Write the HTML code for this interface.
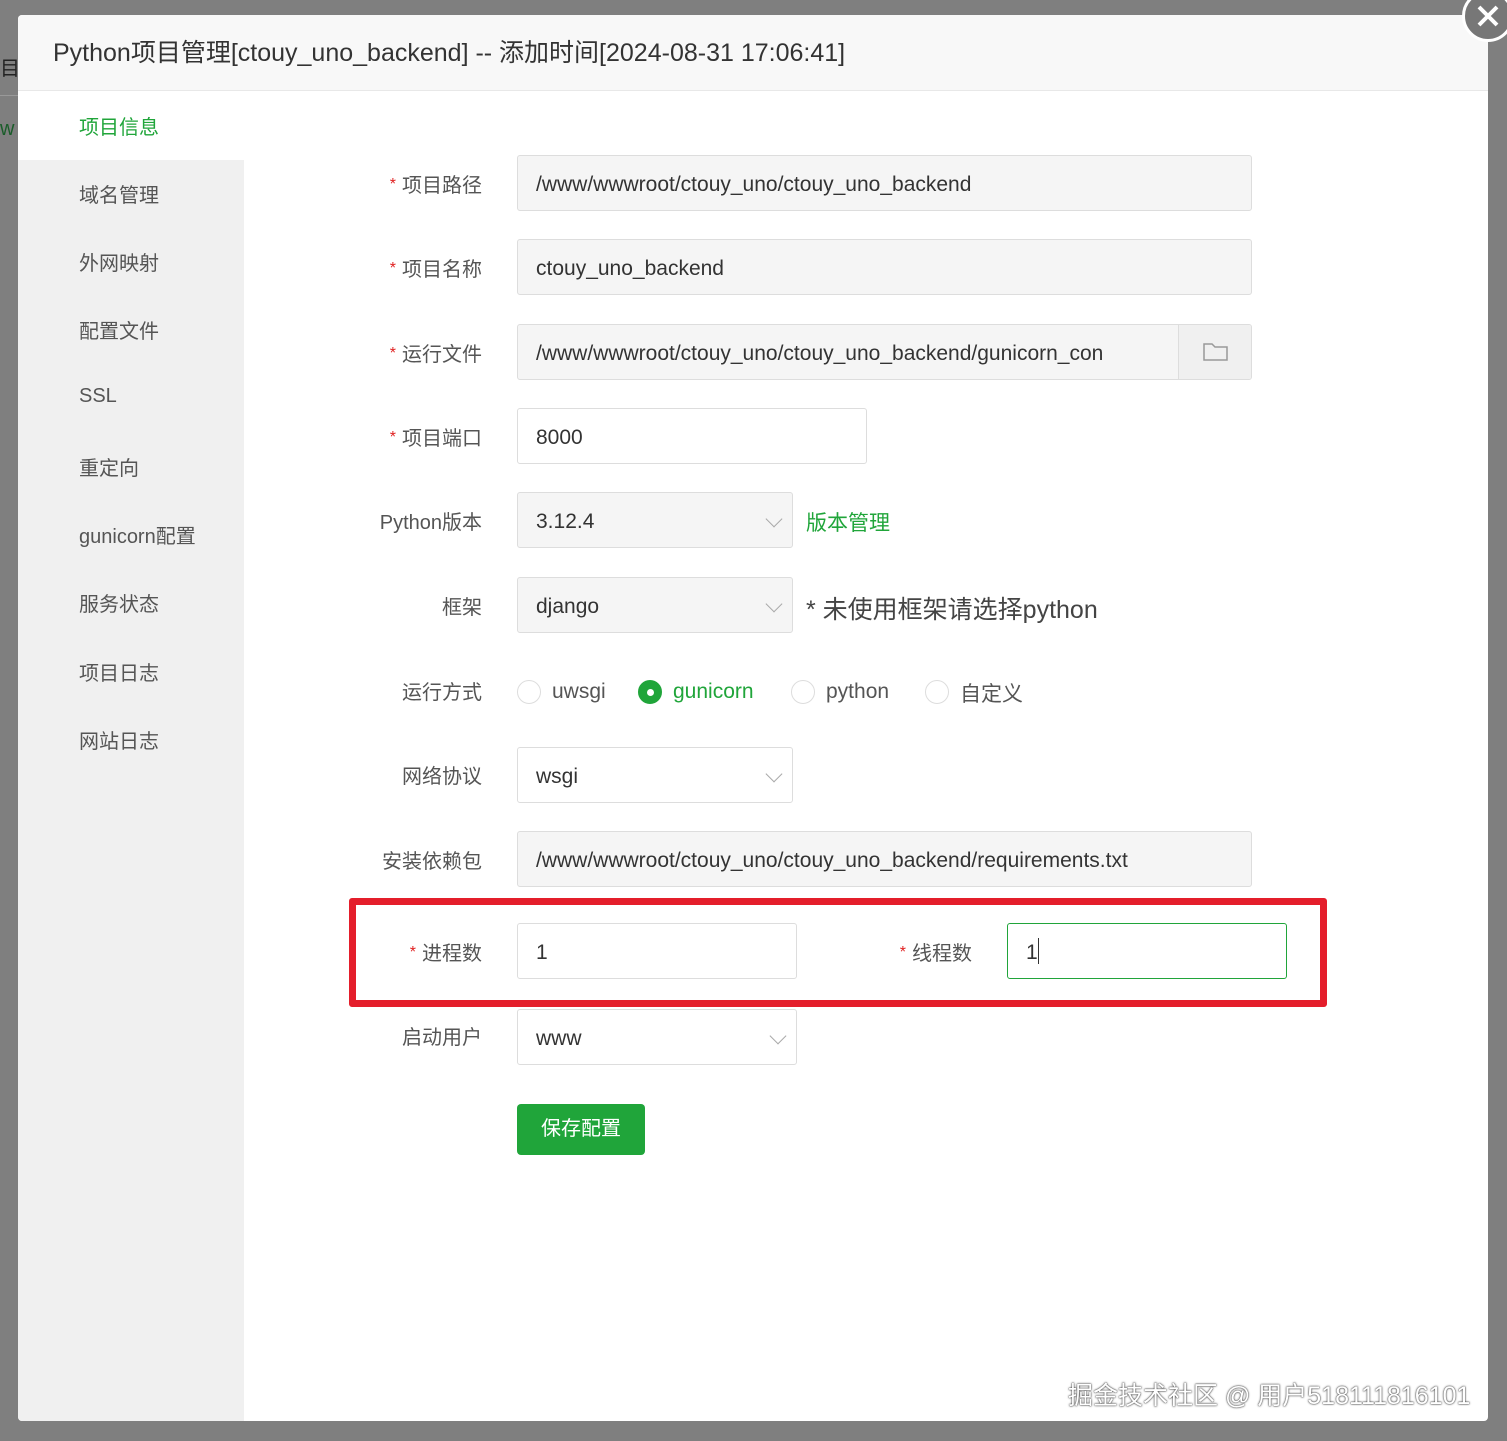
<!DOCTYPE html>
<html><head><meta charset="utf-8"><style>
*{margin:0;padding:0;box-sizing:border-box}
body{width:1507px;height:1441px;background:#7f7f7f;position:relative;overflow:hidden;font-family:"Liberation Sans","Noto Sans CJK SC",sans-serif;color:#555}
.a{position:absolute}
.modal{left:18px;top:15px;width:1470px;height:1406px;background:#fff;border-radius:4px;overflow:hidden}
.hd{left:0;top:0;width:1470px;height:76px;background:#f8f8f8;border-bottom:1px solid #e8e8e8;font-size:25px;color:#333;line-height:76px;padding-left:35px}
.side{left:0;top:145px;width:226px;height:1261px;background:#f0f0f0}
.nav{left:61px;font-size:20px;color:#555}
.lbl{width:200px;text-align:right;left:282px;font-size:20px;color:#555}
.lbl i{color:#e02020;font-style:normal;font-size:16px;margin-right:6px;vertical-align:3px}
.in{left:517px;height:56px;border:1px solid #ddd;border-radius:3px;font-size:21px;color:#333;padding-left:18px;line-height:57px;background:#f5f5f5}
.w{background:#fff}
.chev{position:absolute;right:12px;top:20px;width:12px;height:12px;border-right:1.5px solid #aaa;border-bottom:1.5px solid #aaa;transform:rotate(45deg)}
.r{width:24px;height:24px;border:1px solid #ddd;border-radius:50%;top:680px}
.rt{top:680px;font-size:21px;color:#555}
</style></head><body>
<div class="a" style="left:0;top:95px;width:18px;height:1px;background:#999"></div>
<div class="a" style="left:0;top:52px;font-size:20px;color:#222">目</div>
<div class="a" style="left:0;top:118px;font-size:20px;color:#1a5d2a">w</div>
<div class="a modal">
<div class="a hd">Python项目管理[ctouy_uno_backend] -- 添加时间[2024-08-31 17:06:41]</div>
<div class="a side"></div>
<div class="a nav" style="top:96px;color:#20a53a">项目信息</div>
<div class="a nav" style="top:164px">域名管理</div>
<div class="a nav" style="top:232px">外网映射</div>
<div class="a nav" style="top:300px">配置文件</div>
<div class="a nav" style="top:370px">SSL</div>
<div class="a nav" style="top:437px">重定向</div>
<div class="a nav" style="top:505px">gunicorn配置</div>
<div class="a nav" style="top:573px">服务状态</div>
<div class="a nav" style="top:642px">项目日志</div>
<div class="a nav" style="top:710px">网站日志</div>
</div>
<div class="a lbl" style="top:169px"><i>*</i>项目路径</div>
<div class="a in" style="top:155px;width:735px">/www/wwwroot/ctouy_uno/ctouy_uno_backend</div>
<div class="a lbl" style="top:253px"><i>*</i>项目名称</div>
<div class="a in" style="top:239px;width:735px">ctouy_uno_backend</div>
<div class="a lbl" style="top:338px"><i>*</i>运行文件</div>
<div class="a in" style="top:324px;width:735px;overflow:hidden;white-space:nowrap;padding-right:75px">/www/wwwroot/ctouy_uno/ctouy_uno_backend/gunicorn_con
<div class="a" style="right:0;top:0;width:73px;height:54px;background:#f0f0f0;border-left:1px solid #ddd">
<svg width="73" height="54"><path d="M25 19h8l3 3h12v13H25z" fill="none" stroke="#999" stroke-width="1.5"/></svg></div></div>
<div class="a lbl" style="top:422px"><i>*</i>项目端口</div>
<div class="a in w" style="top:408px;width:350px">8000</div>
<div class="a lbl" style="top:506px">Python版本</div>
<div class="a in" style="top:492px;width:276px">3.12.4<span class="chev"></span></div>
<div class="a" style="left:806px;top:507px;font-size:21px;color:#20a53a">版本管理</div>
<div class="a lbl" style="top:591px">框架</div>
<div class="a in" style="top:577px;width:276px">django<span class="chev"></span></div>
<div class="a" style="left:806px;top:590px;font-size:25px;color:#444">* 未使用框架请选择python</div>
<div class="a lbl" style="top:676px">运行方式</div>
<div class="a r" style="left:517px"></div><div class="a rt" style="left:552px">uwsgi</div>
<div class="a r" style="left:638px;background:#20a53a;border-color:#20a53a"><div class="a" style="left:8px;top:8px;width:7px;height:7px;border-radius:50%;background:#fff"></div></div><div class="a rt" style="left:673px;color:#20a53a">gunicorn</div>
<div class="a r" style="left:791px"></div><div class="a rt" style="left:826px">python</div>
<div class="a r" style="left:925px"></div><div class="a rt" style="left:960px;top:678px">自定义</div>
<div class="a lbl" style="top:760px">网络协议</div>
<div class="a in w" style="top:747px;width:276px">wsgi<span class="chev"></span></div>
<div class="a lbl" style="top:845px">安装依赖包</div>
<div class="a in" style="top:831px;width:735px">/www/wwwroot/ctouy_uno/ctouy_uno_backend/requirements.txt</div>
<div class="a" style="left:349px;top:898px;width:978px;height:109px;border:7px solid #e41e2b;border-radius:3px"></div>
<div class="a lbl" style="top:937px"><i>*</i>进程数</div>
<div class="a in w" style="top:923px;width:280px">1</div>
<div class="a lbl" style="top:937px;left:772px"><i>*</i>线程数</div>
<div class="a in w" style="top:923px;left:1007px;width:280px;border-color:#20a53a">1<span style="display:inline-block;width:1px;height:26px;background:#333;vertical-align:-5px"></span></div>
<div class="a lbl" style="top:1021px">启动用户</div>
<div class="a in w" style="top:1009px;width:280px">www<span class="chev"></span></div>
<div class="a" style="left:517px;top:1104px;width:128px;height:51px;background:#20a53a;border-radius:4px;color:#fff;font-size:20px;line-height:51px;text-align:center">保存配置</div>
<div class="a" style="left:1068px;top:1376px;font-size:25px;color:#fff;text-shadow:0 0 2px #333,0 0 1px #333">掘金技术社区 @ 用户518111816101</div>
<div class="a" style="left:1462px;top:-10px;width:52px;height:52px;border-radius:50%;background:#777;border:3px solid #fff"><svg width="46" height="46"><path d="M14 14L32 32M32 14L14 32" stroke="#fff" stroke-width="4"/></svg></div>
</body></html>
